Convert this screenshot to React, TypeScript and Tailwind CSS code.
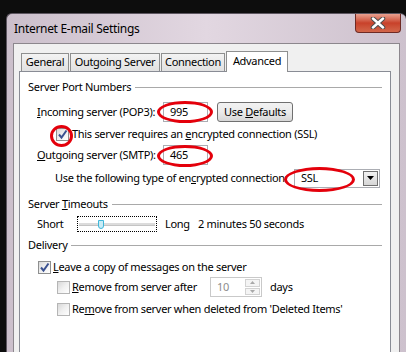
import type { ReactNode } from 'react'

const font = { fontFamily: '"Noto Sans", "Open Sans", sans-serif' }

function Check({ checked = false, dim = false }: { checked?: boolean; dim?: boolean }) {
  return (
    <span
      className={`w-[13px] h-[13px] shrink-0 border flex items-center justify-center ${
        dim ? 'border-[#b5b5b5]' : 'border-[#8e8f8f]'
      } bg-gradient-to-br from-[#d8d8d8] via-[#f0f0f0] to-[#ffffff]`}
    >
      {checked && (
        <svg width="11" height="11" viewBox="0 0 11 11">
          <path d="M2 5.5 L4.5 8.5 L9.5 1.5" fill="none" stroke="#3a5190" strokeWidth="2" />
        </svg>
      )}
    </span>
  )
}

function Section({ title }: { title: ReactNode }) {
  return (
    <div className="flex items-center h-[16px] pl-[8px] pr-[8px]">
      <span className="whitespace-nowrap">{title}</span>
      <span className="flex-1 h-px bg-[#a9a9a9] ml-[4px]" />
    </div>
  )
}

function Ring({ className }: { className: string }) {
  return <span className={`absolute rounded-[50%] border-[3px] border-[#e4000b] ${className}`} />
}

export default function App() {
  const tabs = [
    { label: 'General', w: 'w-[48px]' },
    { label: 'Outgoing Server', w: 'w-[90px]' },
    { label: 'Connection', w: 'w-[64px]' },
  ]

  return (
    <div className="w-[406px] h-[352px] overflow-hidden bg-[#0d0d0d] pt-[13px] pl-[6px] text-[11px] tracking-[-0.3px] text-black" style={font}>
      <div className="w-[400px] h-[360px] rounded-t-[6px] border-l border-t border-[#5d5660] bg-gradient-to-r from-[#cbbfcb] via-[#e2d7e1] to-[#cdc1cd] px-[6px] flex flex-col">
        {/* title bar */}
        <div className="h-[29px] flex justify-between shrink-0">
          <span className="self-center pl-[1px] pt-[1px] text-[12px] tracking-[-0.3px]">Internet E-mail Settings</span>
          <span className="w-[46px] h-[19px] mr-[-1px] rounded-b-[4px] border border-t-0 border-[#6e2a24] bg-gradient-to-b from-[#e8a08f] via-[#c8412a] to-[#d2664a] flex items-center justify-center">
            <svg width="16" height="12" viewBox="0 0 16 12">
              <path d="M3 1.5 L13 10.5 M13 1.5 L3 10.5" stroke="#4d4d4d" strokeWidth="4.5" strokeLinecap="round" />
              <path d="M3 1.5 L13 10.5 M13 1.5 L3 10.5" stroke="#ffffff" strokeWidth="2.5" strokeLinecap="round" />
            </svg>
          </span>
        </div>

        {/* client area */}
        <div className="flex-1 bg-[#f0f0f0] border border-[#8c878d] pt-[7px] pl-[5px]">
          <div className="flex items-end h-[21px] pl-[2px] -mb-px relative z-10">
            {tabs.map((t) => (
              <span
                key={t.label}
                className={`${t.w} h-[18px] mb-px mr-px border border-b-0 border-[#8e8f8f] bg-gradient-to-b from-[#f3f3f3] to-[#e1e1e1] flex items-center justify-center whitespace-nowrap`}
              >
                {t.label}
              </span>
            ))}
            <span className="w-[62px] h-[21px] border border-b-0 border-[#8e8f8f] bg-white flex items-start pt-[1px] justify-center">
              Advanced
            </span>
          </div>

          <div className="relative w-[372px] h-[300px] bg-white border border-[#898c95] pt-[7px]">
            <Section title="Server Port Numbers" />

            <div className="flex items-center h-[22px] mt-[6px] pl-[17px]">
              <span className="w-[126px] whitespace-nowrap"><u>I</u>ncoming server (POP3):</span>
              <span className="w-[45px] h-[20px] border border-[#abadb3] pl-[6px] flex items-center">995</span>
              <span className="ml-[9px] w-[76px] h-[20px] rounded-[3px] border border-[#707070] bg-gradient-to-b from-[#f2f2f2] via-[#ebebeb] to-[#d6d6d6] flex items-center justify-center">
                <span className="whitespace-nowrap">Use <u>D</u>efaults</span>
              </span>
            </div>

            <div className="flex items-center h-[22px] pl-[36px]">
              <Check checked />
              <span className="ml-[3px] whitespace-nowrap">This server requires an <u>e</u>ncrypted connection (SSL)</span>
            </div>

            <div className="flex items-center h-[20px] pl-[17px]">
              <span className="w-[126px] whitespace-nowrap"><u>O</u>utgoing server (SMTP):</span>
              <span className="w-[45px] h-[20px] border border-[#abadb3] pl-[6px] flex items-center">465</span>
            </div>

            <div className="flex items-center h-[22px] mt-[2px] pl-[35px]">
              <span className="w-[239px] whitespace-nowrap">Use the following type of en<u>c</u>rypted connection:</span>
              <span className="w-[86px] h-[19px] border border-[#abadb3] flex items-center justify-between pl-[6px] pr-px">
                SSL
                <span className="w-[15px] h-[15px] border border-[#707070] bg-gradient-to-b from-[#f2f2f2] to-[#d6d6d6] flex items-center justify-center">
                  <svg width="7" height="4" viewBox="0 0 7 4"><path d="M0 0 H7 L3.5 4 Z" fill="#000" /></svg>
                </span>
              </span>
            </div>

            <div className="mt-[7px]">
              <Section title={<>Server <u>T</u>imeouts</>} />
            </div>

            <div className="flex items-center h-[18px] mt-[3px] pl-[17px]">
              <span className="w-[40px]">Short</span>
              <span className="w-[80px] h-[16px] border border-dotted border-black flex items-center px-[1px]">
                <span className="relative w-full h-[3px] bg-[#dcdcdc] border-b border-[#c4c4c4]">
                  <span className="absolute left-[19px] -top-[3px] w-[6px] h-[9px] rounded-b-[3px] border border-[#3fb6d8] bg-[#c9ecf6]" />
                </span>
              </span>
              <span className="ml-[8px] w-[33px]">Long</span>
              <span className="whitespace-nowrap">2 minutes 50 seconds</span>
            </div>

            <div className="mt-[4px]">
              <Section title="Delivery" />
            </div>

            <div className="flex items-center h-[18px] mt-[5px] pl-[18px]">
              <Check checked />
              <span className="ml-[2px] whitespace-nowrap"><u>L</u>eave a copy of messages on the server</span>
            </div>

            <div className="flex items-center h-[20px] mt-px pl-[37px]">
              <span className="w-[153px] flex items-center">
                <Check dim />
                <span className="ml-[2px] whitespace-nowrap"><u>R</u>emove from server after</span>
              </span>
              <span className="w-[52px] h-[20px] border border-[#c9c9c9] flex items-center justify-between pl-[6px] pr-px text-[#8c8c8c]">
                10
                <span className="w-[15px] h-[16px] flex flex-col gap-px">
                  <span className="flex-1 border border-[#d2d2d2] bg-[#f4f4f4] flex items-center justify-center">
                    <svg width="5" height="3" viewBox="0 0 5 3"><path d="M0 3 H5 L2.5 0 Z" fill="#a8a8a8" /></svg>
                  </span>
                  <span className="flex-1 border border-[#d2d2d2] bg-[#f4f4f4] flex items-center justify-center">
                    <svg width="5" height="3" viewBox="0 0 5 3"><path d="M0 0 H5 L2.5 3 Z" fill="#a8a8a8" /></svg>
                  </span>
                </span>
              </span>
              <span className="ml-[8px]">days</span>
            </div>

            <div className="flex items-center h-[18px] mt-[3px] pl-[37px]">
              <Check dim />
              <span className="ml-[2px] whitespace-nowrap">Re<u>m</u>ove from server when deleted from 'Deleted Items'</span>
            </div>

            {/* red annotation rings */}
            <Ring className="left-[137px] top-[29px] w-[56px] h-[22px]" />
            <Ring className="left-[30px] top-[53px] w-[23px] h-[22px]" />
            <Ring className="left-[137px] top-[73px] w-[56px] h-[22px]" />
            <Ring className="left-[264px] top-[95px] w-[71px] h-[25px]" />
          </div>
        </div>
      </div>
    </div>
  )
}
